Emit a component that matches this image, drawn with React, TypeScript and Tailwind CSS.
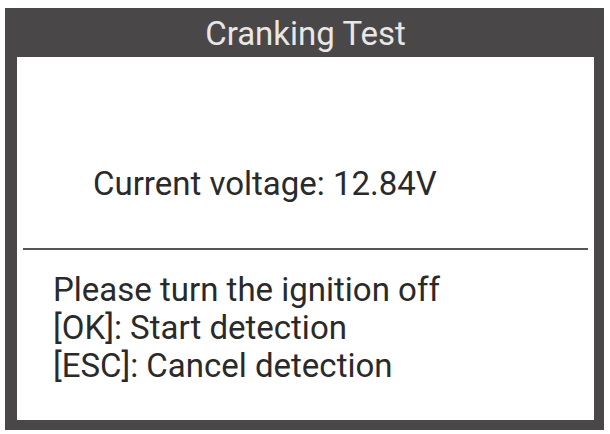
export default function App() {
  return (
    <div className="w-[610px] h-[434px] bg-white pl-[5px] pt-[8px]" style={{ fontFamily: 'Roboto, "Liberation Sans", sans-serif' }}>
      <div className="w-[599px] h-[422px] bg-[#4a4748] pl-[12px] pr-[10px] pb-[10px] flex flex-col">
        <div className="h-[49px] pt-[2px] flex items-center justify-center text-[33px] leading-[37px] text-[#e8e6e6]">
          Cranking Test
        </div>
        <div className="flex-1 bg-white flex flex-col text-[#2a2a2a] text-[33px] leading-[37px]">
          <div className="h-[191px] pt-[108px] pl-[76px]">Current voltage: 12.84V</div>
          <div className="mx-[6px] h-[2px] bg-[#555]" />
          <div className="pt-[21px] pl-[36px] leading-[38px]">
            <div>Please turn the ignition off</div>
            <div>[OK]: Start detection</div>
            <div>[ESC]: Cancel detection</div>
          </div>
        </div>
      </div>
    </div>
  )
}
